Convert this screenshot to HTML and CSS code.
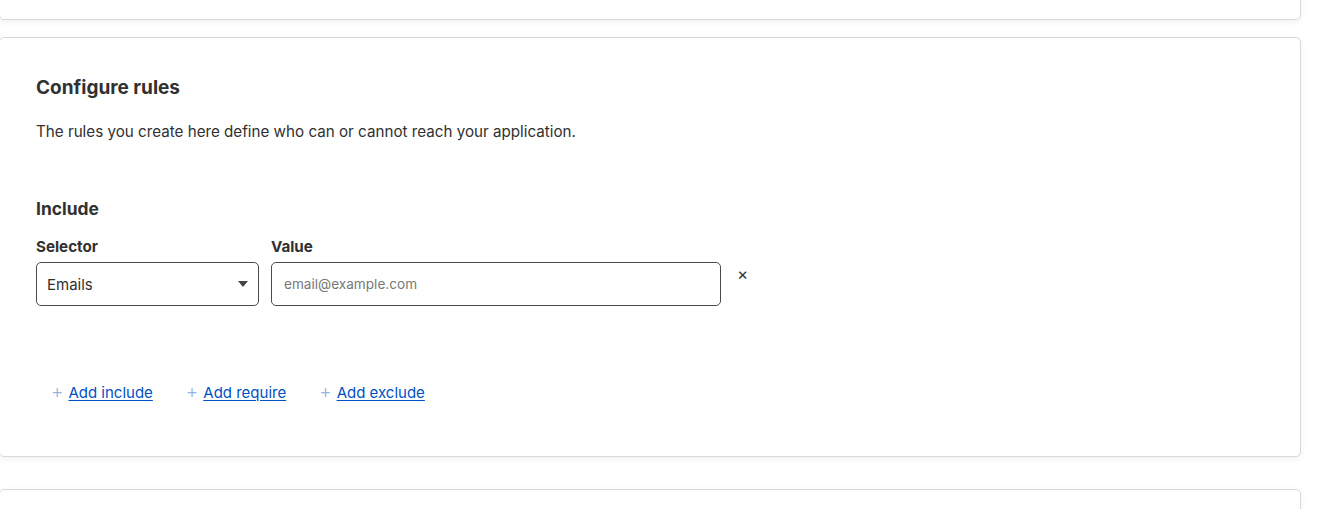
FILE: index.html
```html
<!DOCTYPE html>
<html lang="en">
<head>
  <meta charset="UTF-8" />
  <title>Access policy</title>
  <link rel="stylesheet" href="styles.css">
</head>
<body>

  <div class="page">

    <section class="card card-top"></section>

    <section class="card card-rules">
      <h2 class="card-title">Configure rules</h2>
      <p class="card-desc">The rules you create here define who can or cannot reach your application.</p>

      <div class="rule-group">
        <h3 class="group-title">Include</h3>
        <div class="rule-row">
          <div class="field field-selector">
            <label class="field-label">Selector</label>
            <div class="select-box">
              <span>Emails</span>
              <span class="caret"></span>
            </div>
          </div>
          <div class="field field-value">
            <label class="field-label">Value</label>
            <input class="text-input" type="text" placeholder="email@example.com" />
          </div>
          <button class="remove-btn" aria-label="Remove rule">&times;</button>
        </div>
      </div>

      <div class="add-links">
        <span class="add-link"><span class="plus">+</span><a href="#">Add include</a></span>
        <span class="add-link"><span class="plus">+</span><a href="#">Add require</a></span>
        <span class="add-link"><span class="plus">+</span><a href="#">Add exclude</a></span>
      </div>
    </section>

    <section class="card card-bottom"></section>

  </div>

</body>
</html>
```

FILE: styles.css
```css
/* Base */
html, body {
  margin: 0;
  padding: 0;
  background: #fff;
  font-family: Inter, "Noto Sans", sans-serif;
  color: #313131;
  overflow: hidden;
}

.page {
  width: 1302px;
  margin-left: -1px;
}

/* Cards */
.card {
  background: #fff;
  border: 1px solid #d9d9d9;
  border-radius: 5px;
  box-shadow: 0 2px 6px rgba(0,0,0,0.06);
  box-sizing: border-box;
}

.card-top {
  height: 60px;
  margin-top: -40px;
  margin-bottom: 17px;
}

.card-rules {
  height: 420px;
  padding: 36px 36px 0 36px;
  margin-bottom: 32px;
}

.card-bottom {
  height: 80px;
}

.card-title {
  margin: 0;
  font-size: 19px;
  font-weight: 700;
  line-height: 28px;
}

.card-desc {
  margin: 20px 0 0 0;
  font-size: 15.2px;
  line-height: 20px;
}

/* Rule group */
.rule-group {
  margin-top: 55px;
}

.group-title {
  margin: 0;
  font-size: 17.4px;
  font-weight: 700;
  line-height: 24px;
}

.rule-row {
  display: flex;
  align-items: flex-start;
  gap: 12px;
  margin-top: 14px;
}

.field {
  display: flex;
  flex-direction: column;
}

.field-label {
  font-size: 15.2px;
  font-weight: 700;
  line-height: 24px;
  margin-bottom: 3px;
}

.field-selector { width: 223px; }
.field-value { width: 450px; }

.select-box, .text-input {
  height: 44px;
  box-sizing: border-box;
  border: 1px solid #4a4a4a;
  border-radius: 5px;
  background: #fff;
}

.select-box {
  display: flex;
  align-items: center;
  justify-content: space-between;
  padding: 0 10px 0 10px;
  font-size: 15px;
}

.caret {
  width: 0;
  height: 0;
  border-left: 5px solid transparent;
  border-right: 5px solid transparent;
  border-top: 6px solid #444;
}

.text-input {
  width: 100%;
  padding: 0 12px;
  font-family: inherit;
  font-size: 13.6px;
  color: #313131;
  outline: none;
}
.text-input::placeholder {
  color: #777;
}

.remove-btn {
  margin-top: 29px;
  margin-left: 4px;
  padding: 0;
  border: none;
  background: none;
  font-family: inherit;
  font-size: 17px;
  color: #333;
  cursor: pointer;
}

/* Add links */
.add-links {
  display: flex;
  gap: 33px;
  margin-top: 74px;
  padding-left: 15px;
}

.add-link {
  font-size: 15px;
}

.plus {
  color: #93b1e4;
  font-size: 19px;
  font-weight: 300;
  margin-right: 5px;
}

.add-link a {
  color: #0051c3;
  text-decoration: underline;
  text-underline-offset: 2px;
}
```
